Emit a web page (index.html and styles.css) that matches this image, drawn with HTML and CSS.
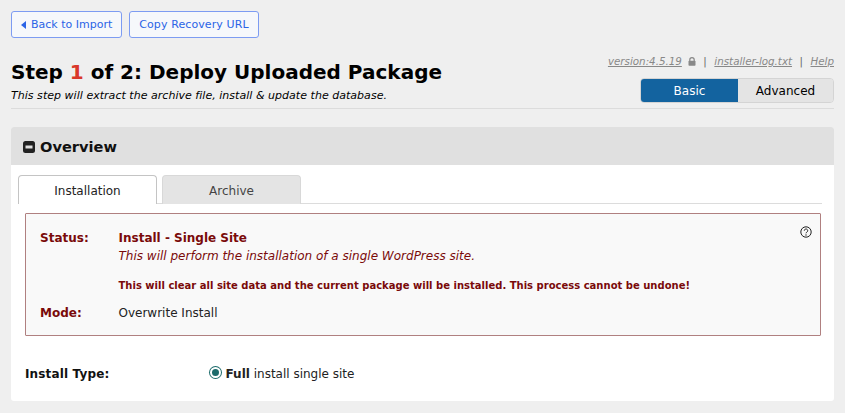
FILE: index.html
```html
<!DOCTYPE html>
<html lang="en">
<head>
  <meta charset="UTF-8" />
  <title>Installer</title>
  <link rel="stylesheet" href="styles.css">
</head>
<body>
  <div class="top-btns">
    <a class="btn"><span class="back-arrow"></span>Back to Import</a>
    <a class="btn btn-wide">Copy Recovery URL</a>
  </div>

  <div class="header">
    <div class="header-left">
      <h1>Step <span class="step-num">1</span> of 2: Deploy Uploaded Package</h1>
      <p class="subtitle">This step will extract the archive file, install &amp; update the database.</p>
    </div>
    <div class="header-right">
      <div class="meta">
        <a>version:4.5.19</a>
        <svg class="lock" width="8" height="9" viewBox="0 0 8 9"><path d="M1.8 4V2.8a2.2 2.2 0 0 1 4.4 0V4" fill="none" stroke="#888" stroke-width="1.2"/><rect x="0.5" y="3.8" width="7" height="5" rx="0.8" fill="#888"/></svg>
        <span class="sep">|</span>
        <a>installer-log.txt</a>
        <span class="sep">|</span>
        <a>Help</a>
      </div>
      <div class="mode-switch">
        <div class="mode active">Basic</div>
        <div class="mode">Advanced</div>
      </div>
    </div>
  </div>

  <div class="panel">
    <div class="panel-head">
      <svg class="minus" width="12" height="12" viewBox="0 0 12 12"><rect width="12" height="12" rx="2.5" fill="#222"/><rect x="2.5" y="4.5" width="7" height="3" fill="#e0e0e0"/></svg>
      Overview
    </div>
    <div class="panel-body">
      <div class="tabs">
        <div class="tab active">Installation</div>
        <div class="tab">Archive</div>
      </div>
      <div class="status-box">
        <svg class="help" width="12" height="12" viewBox="0 0 12 12"><circle cx="6" cy="6" r="5.2" fill="none" stroke="#222" stroke-width="1"/><path d="M4.3 4.7a1.7 1.7 0 1 1 2.6 1.4c-.6.4-.9.6-.9 1.2" fill="none" stroke="#222" stroke-width="1"/><circle cx="6" cy="9" r="0.7" fill="#222"/></svg>
        <div class="row">
          <div class="label">Status:</div>
          <div class="value">
            <b>Install - Single Site</b>
            <em>This will perform the installation of a single WordPress site.</em>
            <strong>This will clear all site data and the current package will be installed. This process cannot be undone!</strong>
          </div>
        </div>
        <div class="row mode-row">
          <div class="label">Mode:</div>
          <div class="plain">Overwrite Install</div>
        </div>
      </div>
      <div class="install-type">
        <div class="type-label">Install Type:</div>
        <label class="type-opt"><span class="radio"></span><span><b>Full</b> install single site</span></label>
      </div>
    </div>
  </div>
</body>
</html>
```

FILE: styles.css
```css
* {
  box-sizing: border-box;
}
html, body {
  margin: 0;
  padding: 0;
  height: 413px;
  overflow: hidden;
}
body {
  background: #efefef;
  color: #000;
  font-family: "DejaVu Sans", Verdana, sans-serif;
  font-size: 12px;
  padding: 11px 11px 0;
}
.top-btns {
  display: flex;
  gap: 7px;
}
.btn {
  display: flex;
  align-items: center;
  height: 27px;
  padding: 0 9px;
  background: #f6f8fb;
  border: 1px solid #7d9cf2;
  border-radius: 3px;
  color: #2b64e6;
  font-size: 11px;
}
.btn-wide {
  letter-spacing: 0.1px;
}
.back-arrow {
  width: 0;
  height: 0;
  margin-right: 5px;
  border-style: solid;
  border-width: 4px 5px 4px 0;
  border-color: transparent #2b64e6 transparent transparent;
}
.header {
  display: flex;
  justify-content: space-between;
  height: 71px;
  border-bottom: 1px solid #dcdcdc;
}
h1 {
  margin: 22px 0 0;
  font-size: 20px;
  line-height: 25px;
  font-weight: bold;
}
.step-num {
  color: #d9382a;
}
.subtitle {
  margin: 4px 0 0;
  font-size: 11px;
  line-height: 14px;
  font-style: italic;
  letter-spacing: 0.03px;
}
.header-right {
  display: flex;
  flex-direction: column;
  align-items: flex-end;
}
.meta {
  display: flex;
  align-items: center;
  margin-top: 16px;
  font-size: 10.3px;
  line-height: 15px;
  font-style: italic;
  color: #888;
}
.meta a {
  text-decoration: underline;
}
.lock {
  margin-left: 6px;
}
.sep {
  margin: 0 7.5px;
  font-style: normal;
  color: #666;
}
.mode-switch {
  display: flex;
  width: 194px;
  height: 25px;
  margin-top: 9px;
  border: 1px solid #d4d4d4;
  border-radius: 4px;
  overflow: hidden;
}
.mode {
  flex: 1;
  display: flex;
  align-items: center;
  justify-content: center;
  background: #e4e4e4;
  font-size: 12px;
}
.mode.active {
  flex: 0 0 97px;
  background: #13639f;
  color: #fff;
}
.panel {
  margin-top: 18px;
  background: #fff;
  border-radius: 3px;
  height: 274px;
  overflow: hidden;
}
.panel-head {
  display: flex;
  align-items: center;
  gap: 5px;
  height: 38px;
  padding: 1px 12px 0;
  background: #e0e0e0;
  font-size: 14.6px;
  font-weight: bold;
  color: #111;
}
.panel-body {
  padding: 10px 13px 0 14px;
}
.tabs {
  display: flex;
  gap: 5px;
  height: 29px;
  margin-left: -7px;
  margin-right: -1px;
  border-bottom: 1px solid #dcdcdc;
}
.tab {
  display: flex;
  align-items: center;
  justify-content: center;
  width: 139px;
  height: 29px;
  padding-top: 1px;
  background: #e4e4e4;
  border: 1px solid #d8d8d8;
  border-bottom: none;
  border-radius: 4px 4px 0 0;
  color: #444;
  font-size: 12px;
}
.tab.active {
  background: #fff;
  border-color: #c4c4c4;
  color: #222;
}
.status-box {
  position: relative;
  height: 123px;
  margin-top: 9px;
  padding: 16px 14px;
  background: #f9f9f9;
  border: 1px solid #b08080;
  border-radius: 1px;
}
.help {
  position: absolute;
  top: 12px;
  right: 8px;
}
.row {
  display: flex;
}
.label {
  width: 78.5px;
  font-weight: bold;
  color: #7a0a0a;
  line-height: 16px;
}
.value {
  color: #7a0a0a;
}
.value b {
  display: block;
  line-height: 16px;
}
.value em {
  display: block;
  margin-top: 2px;
  line-height: 17px;
}
.value strong {
  display: block;
  margin-top: 14px;
  font-size: 10px;
  letter-spacing: 0.01px;
  line-height: 14px;
}
.mode-row {
  margin-top: 12px;
}
.plain {
  color: #222;
  line-height: 16px;
}
.install-type {
  display: flex;
  align-items: center;
  margin-top: 31px;
  font-size: 12px;
  color: #222;
}
.type-label {
  width: 184.5px;
  font-weight: bold;
  color: #111;
  letter-spacing: 0.15px;
}
.type-opt {
  display: flex;
  align-items: center;
  gap: 5px;
}
.radio {
  width: 11px;
  height: 11px;
  margin-top: -3px;
  border-radius: 50%;
  background: #1c6b6b;
  border: 2px solid #fff;
  box-shadow: 0 0 0 1px #1c6b6b;
}
```
